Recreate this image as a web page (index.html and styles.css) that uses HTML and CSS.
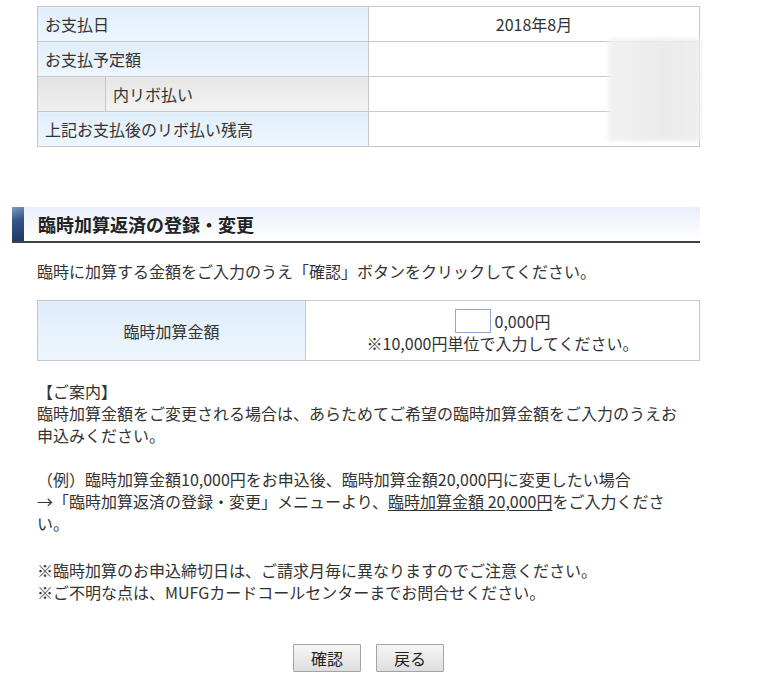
FILE: index.html
```html
<!DOCTYPE html>
<html lang="ja">
<head>
  <meta charset="utf-8">
  <title>臨時加算返済の登録・変更</title>
  <link rel="stylesheet" href="styles.css">
</head>
<body>
  <div class="main">
    <div class="summary-wrap">
      <table class="summary">
        <tr>
          <th colspan="2">お支払日</th>
          <td>2018年8月</td>
        </tr>
        <tr>
          <th colspan="2">お支払予定額</th>
          <td></td>
        </tr>
        <tr class="sub-row">
          <th class="indent"></th>
          <th class="sub">内リボ払い</th>
          <td></td>
        </tr>
        <tr>
          <th colspan="2">上記お支払後のリボ払い残高</th>
          <td></td>
        </tr>
      </table>
      <div class="blur-mask"></div>
    </div>

    <h2 class="section-title">臨時加算返済の登録・変更</h2>

    <p class="lead">臨時に加算する金額をご入力のうえ「確認」ボタンをクリックしてください。</p>

    <table class="entry">
      <tr>
        <th>臨時加算金額</th>
        <td>
          <div class="amount-line"><input type="text" class="amount-input"> 0,000円</div>
          <div>※10,000円単位で入力してください。</div>
        </td>
      </tr>
    </table>

    <div class="notes">
      <p>【ご案内】<br>臨時加算金額をご変更される場合は、あらためてご希望の臨時加算金額をご入力のうえお申込みください。</p>
      <p class="gap">（例）臨時加算金額10,000円をお申込後、臨時加算金額20,000円に変更したい場合<br>→「臨時加算返済の登録・変更」メニューより、<span class="ul">臨時加算金額 20,000円</span>をご入力ください。</p>
      <p class="gap-wide">※臨時加算のお申込締切日は、ご請求月毎に異なりますのでご注意ください。<br>※ご不明な点は、MUFGカードコールセンターまでお問合せください。</p>
    </div>

    <div class="actions">
      <button class="btn">確認</button>
      <button class="btn">戻る</button>
    </div>
  </div>
</body>
</html>
```

FILE: styles.css
```css
body {
  margin: 0;
  padding-top: 6px;
  background-color: #ffffff;
  color: #333;
  font-family: "Noto Sans CJK JP", "Noto Sans", sans-serif;
  font-size: 16px;
}
.main {
  margin-left: 12px;
  width: 688px;
}
.summary-wrap {
  position: relative;
  margin-left: 25px;
  width: 663px;
}
table {
  border-collapse: collapse;
  width: 663px;
}
th, td {
  border: 1px solid #c4c7cc;
  font-weight: normal;
  font-size: 16px;
  line-height: 20px;
}
.summary th, .summary td {
  height: 35px;
  padding: 0 7px;
  box-sizing: border-box;
}
.summary th {
  text-align: left;
  background: linear-gradient(#e0eefb, #eef6fd);
  width: 331px;
}
.summary td {
  text-align: center;
  background-color: #fff;
}
.summary .indent {
  width: 68px;
  background: linear-gradient(#e2e2e2, #f0f0f0);
}
.summary .sub {
  width: 263px;
  background: linear-gradient(#e6e6e6, #f3f3f3);
}
.blur-mask {
  position: absolute;
  left: 571px;
  top: 33px;
  width: 93px;
  height: 102px;
  background: linear-gradient(90deg, #f1f1f1, #ebebeb 60%, #eeeeee);
  filter: blur(2px);
}
.section-title {
  margin: 60px 0 0;
  height: 34px;
  line-height: 34px;
  border-bottom: 2px solid #3d4249;
  background: linear-gradient(#e8effb, #ffffff);
  font-size: 18px;
  font-weight: bold;
  color: #222;
  display: flex;
  align-items: center;
}
.section-title::before {
  content: "";
  width: 12px;
  height: 34px;
  margin-right: 14px;
  background: linear-gradient(160deg, #8299c0 0%, #34548a 40%, #1d3766 100%);
}
.lead {
  margin: 17px 0 0 25px;
  line-height: 22px;
}
.entry {
  margin: 18px 0 0 25px;
}
.entry th, .entry td {
  height: 56px;
  text-align: center;
  line-height: 20px;
}
.entry th {
  width: 265px;
  background: linear-gradient(#deedfa, #eef6fd);
}
.entry td {
  padding-top: 2px;
}
.amount-line {
  display: flex;
  justify-content: center;
  align-items: center;
  gap: 4px;
}
.amount-input {
  width: 36px;
  height: 24px;
  box-sizing: border-box;
  border: 1px solid #8fa6d0;
  margin: 0;
  padding: 0;
}
.notes {
  margin: 19px 0 0 25px;
  width: 648px;
  line-height: 22px;
}
.notes p {
  margin: 0;
}
.notes .gap {
  margin-top: 22px;
}
.notes .gap-wide {
  margin-top: 25px;
}
.notes .ul {
  display: inline-block;
  text-decoration: underline;
  text-underline-offset: 2px;
}
.actions {
  margin: 41px 0 0 25px;
  display: flex;
  justify-content: center;
  gap: 15px;
  width: 663px;
}
.btn {
  width: 68px;
  height: 28px;
  font-family: inherit;
  font-size: 16px;
  color: #222;
  border: 1px solid #a3a3a3;
  border-radius: 1px;
  background: linear-gradient(#f6f6f6, #dedede);
  padding: 0;
  cursor: pointer;
}
```
